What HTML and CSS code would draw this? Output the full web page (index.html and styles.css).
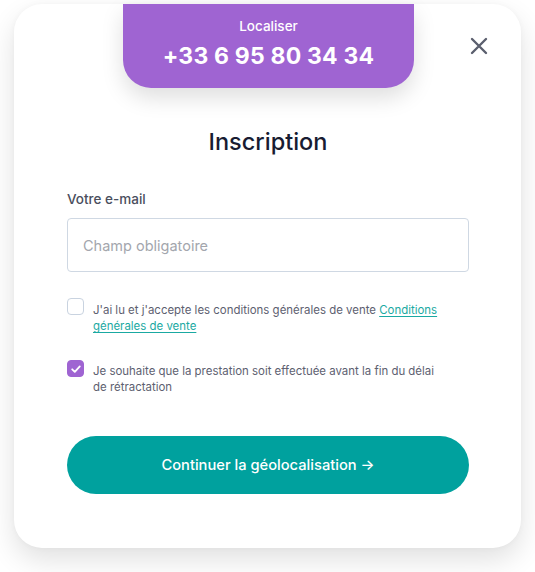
FILE: index.html
```html
<!DOCTYPE html>
<html lang="fr">
<head>
<meta charset="utf-8">
<link rel="stylesheet" href="styles.css">
</head>
<body>
<div class="card">
  <div class="tab">
    <div class="tab-label">Localiser</div>
    <div class="tab-phone">+33 6 95 80 34 34</div>
  </div>
  <button class="close" aria-label="Fermer">
    <svg width="18" height="18" viewBox="0 0 18 18"><path d="M2 2 L16 16 M16 2 L2 16" stroke="#5b5f6e" stroke-width="2.4" stroke-linecap="round"/></svg>
  </button>
  <h1 class="title">Inscription</h1>
  <label class="label">Votre e-mail</label>
  <div class="input">Champ obligatoire</div>
  <div class="check-row first">
    <span class="box"></span>
    <span class="check-text">J'ai lu et j'accepte les conditions générales de vente <a class="link">Conditions générales de vente</a></span>
  </div>
  <div class="check-row second">
    <span class="box checked">
      <svg width="12" height="12" viewBox="0 0 12 12"><path d="M2.2 6.3 L4.8 8.8 L9.8 3.4" fill="none" stroke="#fff" stroke-width="1.8" stroke-linecap="round" stroke-linejoin="round"/></svg>
    </span>
    <span class="check-text">Je souhaite que la prestation soit effectuée avant la fin du délai de rétractation</span>
  </div>
  <div class="btn">Continuer la géolocalisation →</div>
</div>
</body>
</html>
```
FILE: styles.css
```css
* { box-sizing: border-box; }
html, body { margin: 0; padding: 0; background: #fff; }
body { font-family: Inter, "Noto Sans", sans-serif; width: 535px; height: 572px; overflow: hidden; }

.card {
  position: relative;
  margin: 4px 0 0 14px;
  width: 507px;
  height: 544px;
  background: #fff;
  border-radius: 28px;
  box-shadow: 0 12px 28px rgba(0,0,0,0.12), 0 0 6px rgba(0,0,0,0.03);
  display: flex;
  flex-direction: column;
  padding: 0 52px 0 53px;
}

.tab {
  align-self: center;
  width: 291px;
  height: 84px;
  background: #9f64d2;
  border-radius: 0 0 28px 28px;
  box-shadow: 0 10px 22px rgba(0,0,0,0.13);
  color: #fff;
  display: flex;
  flex-direction: column;
  align-items: center;
  padding-top: 14px;
  margin-left: 1px;
}
.tab-label { font-size: 13.5px; font-weight: 500; line-height: 16px; }
.tab-phone { font-size: 23px; font-weight: 700; line-height: 28px; margin-top: 8px; letter-spacing: 0.2px; }

.close {
  position: absolute;
  top: 33px;
  right: 33px;
  width: 18px;
  height: 18px;
  padding: 0;
  border: 0;
  background: none;
  display: flex;
}

.title {
  margin: 39px 0 0;
  text-align: center;
  font-size: 23.5px;
  font-weight: 500;
  line-height: 30px;
  color: #181c32;
}

.label {
  margin-top: 33px;
  font-size: 13.5px;
  font-weight: 500;
  line-height: 18px;
  color: #4a4e5d;
}

.input {
  margin-top: 10px;
  height: 54px;
  border: 1px solid #cfd8e3;
  border-radius: 4px;
  padding: 0 15px;
  display: flex;
  align-items: center;
  font-size: 14.5px;
  color: #a3a6ad;
}

.check-row { display: flex; align-items: flex-start; gap: 9px; }
.check-row.first { margin-top: 26px; }
.check-row.second { margin-top: 26px; }

.box {
  flex: none;
  width: 17px;
  height: 17px;
  border: 1px solid #c9d3e0;
  border-radius: 4px;
  background: #fff;
  display: flex;
  align-items: center;
  justify-content: center;
}
.box.checked { background: #9f64d2; border-color: #9f64d2; }

.check-text {
  width: 352px;
  margin-top: 4px;
  font-size: 11.45px;
  line-height: 16px;
  color: #5d6070;
}
.second .check-text { margin-top: 3px; }
.link { color: #1aa9a2; text-decoration: underline; text-underline-offset: 2px; }

.btn {
  margin-top: 41px;
  height: 58px;
  border-radius: 29px;
  background: #00a19e;
  color: #fff;
  font-size: 14.7px;
  font-weight: 500;
  display: flex;
  align-items: center;
  justify-content: center;
}
```
